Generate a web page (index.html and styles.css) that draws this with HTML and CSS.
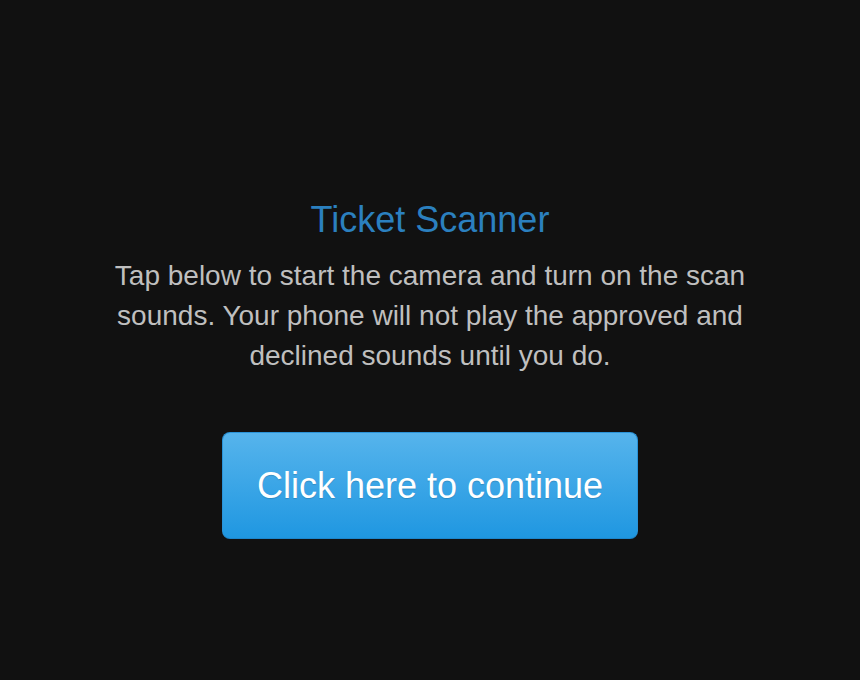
FILE: index.html
```html
<!DOCTYPE html>
<html>
<head>
<meta charset="utf-8">
<link rel="stylesheet" href="styles.css">
</head>
<body>
<main class="page">
  <h1 class="title">Ticket Scanner</h1>
  <p class="intro">Tap below to start the camera and turn on the scan sounds. Your phone will not play the approved and declined sounds until you do.</p>
  <button class="continue">Click here to continue</button>
</main>
</body>
</html>
```
FILE: styles.css
```css
html, body {
  margin: 0;
  padding: 0;
  background: #111111;
  height: 100%;
}
.page {
  display: flex;
  flex-direction: column;
  align-items: center;
  padding-top: 200px;
  font-family: "Liberation Sans", Arial, sans-serif;
}
.title {
  margin: 0;
  font-size: 36px;
  line-height: 40px;
  font-weight: normal;
  color: #2b80bf;
}
.intro {
  margin: 16px 0 0;
  width: 640px;
  text-align: center;
  font-size: 28px;
  line-height: 40px;
  color: #bfbfbf;
}
.continue {
  margin-top: 56px;
  box-sizing: border-box;
  width: 416px;
  height: 107px;
  padding: 0;
  font-family: "Liberation Sans", Arial, sans-serif;
  font-size: 36px;
  color: #ffffff;
  background: linear-gradient(to bottom, #56b4ec, #1f97e1);
  border: 1px solid #2a93d8;
  border-bottom-color: #1d86cc;
  border-radius: 8px;
  text-shadow: 0 1px 1px rgba(0, 0, 0, 0.15);
  cursor: pointer;
}
```
